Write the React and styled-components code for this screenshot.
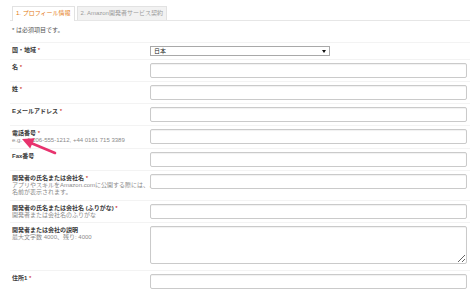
import React from 'react'
import styled, { createGlobalStyle } from 'styled-components'

const GlobalStyle = createGlobalStyle`
  body {
    margin: 0;
    background: #fff;
    font-family: "Liberation Sans", "Noto Sans CJK JP", sans-serif;
  }
`;

const Page = styled.div`
  position: relative;
  width: 474px;
  height: 292px;
  overflow: hidden;
  box-sizing: border-box;
  padding: 6px 4px 0 10px;
`;

const Tabs = styled.div`
  display: flex;
  gap: 2px;
  padding-left: 2px;
  border-bottom: 1px solid #e6e6e6;
  height: 14px;
`;

const Tab = styled.div`
  box-sizing: border-box;
  padding: 0 3px;
  font-size: 6px;
  line-height: 13px;
  white-space: nowrap;
  border: 1px solid #e2e2e2;
  border-bottom: none;
  background: ${({ $active }) => ($active ? '#fff' : '#f2f2f2')};
  color: ${({ $active }) => ($active ? '#e47911' : '#9a9a9a')};
  position: relative;
  z-index: ${({ $active }) => ($active ? 1 : 0)};
  height: ${({ $active }) => ($active ? '15px' : '14px')};
`;

const Note = styled.div`
  font-size: 6px;
  line-height: 8px;
  height: 8px;
  color: #555;
  padding: 5px 0 8px 2px;
`;

const Row = styled.div`
  display: grid;
  grid-template-columns: 138px 1fr;
  border-top: 1px solid #f3f3f3;
  padding: 3px 3px ${({ $tall }) => ($tall ? '6px' : '3px')} 2px;
`;

const LabelCol = styled.div`
  display: flex;
  flex-direction: column;
`;

const Label = styled.div`
  height: 8px;
  font-size: 6px;
  line-height: 8px;
  font-weight: 700;
  color: #3a3a3a;
  white-space: nowrap;
`;

const Req = styled.span`
  color: #c40000;
  font-weight: 400;
`;

const Hint = styled.div`
  height: 7.5px;
  font-size: 6px;
  line-height: 7.5px;
  color: #8a8a8a;
  white-space: nowrap;
`;

const Input = styled.input`
  display: block;
  width: 100%;
  height: 15px;
  box-sizing: border-box;
  margin: 0;
  border: 1px solid #cacaca;
  border-radius: 2px;
  box-shadow: inset 0 1px 1px rgba(0, 0, 0, 0.06);
  background: #fff;
  outline: none;
`;

const TextArea = styled.textarea`
  display: block;
  width: 100%;
  height: 38px;
  box-sizing: border-box;
  margin: 0;
  border: 1px solid #cacaca;
  border-radius: 2px;
  box-shadow: inset 0 1px 1px rgba(0, 0, 0, 0.06);
  background: #fff;
  outline: none;
`;

const Select = styled.div`
  display: flex;
  align-items: center;
  justify-content: space-between;
  width: 180px;
  height: 10px;
  box-sizing: border-box;
  padding: 0 3px;
  border: 1px solid #a9a9a9;
  background: #fff;
  font-size: 6px;
  line-height: 8px;
  color: #222;
`;

const Caret = styled.span`
  width: 0;
  height: 0;
  border-left: 2px solid transparent;
  border-right: 2px solid transparent;
  border-top: 3px solid #111;
`;

const Pointer = styled.svg`
  position: absolute;
  left: 0;
  top: 0;
  pointer-events: none;
`;

const fields = [
  { label: '名', req: true },
  { label: '姓', req: true },
  { label: 'Eメールアドレス', req: true },
  { label: '電話番号', req: true, hint: ['e.g. +1 206-555-1212, +44 0161 715 3389'] },
  { label: 'Fax番号' },
  {
    label: '開発者の氏名または会社名',
    req: true,
    hint: ['アプリやスキルをAmazon.comに公開する際には、この', '名前が表示されます。'],
  },
  { label: '開発者の氏名または会社名 (ふりがな)', req: true, hint: ['開発者または会社名のふりがな'] },
  { label: '開発者または会社の説明', hint: ['最大文字数 4000、残り: 4000'], area: true },
  { label: '住所1', req: true },
]

export default function App() {
  return (
    <>
      <GlobalStyle />
      <Page>
        <Tabs>
          <Tab $active>1. プロフィール情報</Tab>
          <Tab>2. Amazon開発者サービス契約</Tab>
        </Tabs>
        <Note>* は必須項目です。</Note>

        <Row>
          <Label>
            国・地域 <Req>*</Req>
          </Label>
          <Select>
            日本
            <Caret />
          </Select>
        </Row>

        {fields.map((f, i) => (
          <Row key={i} $tall={f.area}>
            <LabelCol>
              <Label>
                {f.label} {f.req && <Req>*</Req>}
              </Label>
              {f.hint && f.hint.map((h, j) => <Hint key={j}>{h}</Hint>)}
            </LabelCol>
            {f.area ? <TextArea /> : <Input type="text" />}
          </Row>
        ))}

        {/* pink annotation arrow */}
        <Pointer width="474" height="292" viewBox="0 0 474 292">
          <line x1="55" y1="153" x2="31" y2="143" stroke="#e8336e" strokeWidth="2.6" strokeLinecap="round" />
          <polygon points="22,139 34.6,138.3 30.2,148.5" fill="#e8336e" />
        </Pointer>
      </Page>
    </>
  )
}
